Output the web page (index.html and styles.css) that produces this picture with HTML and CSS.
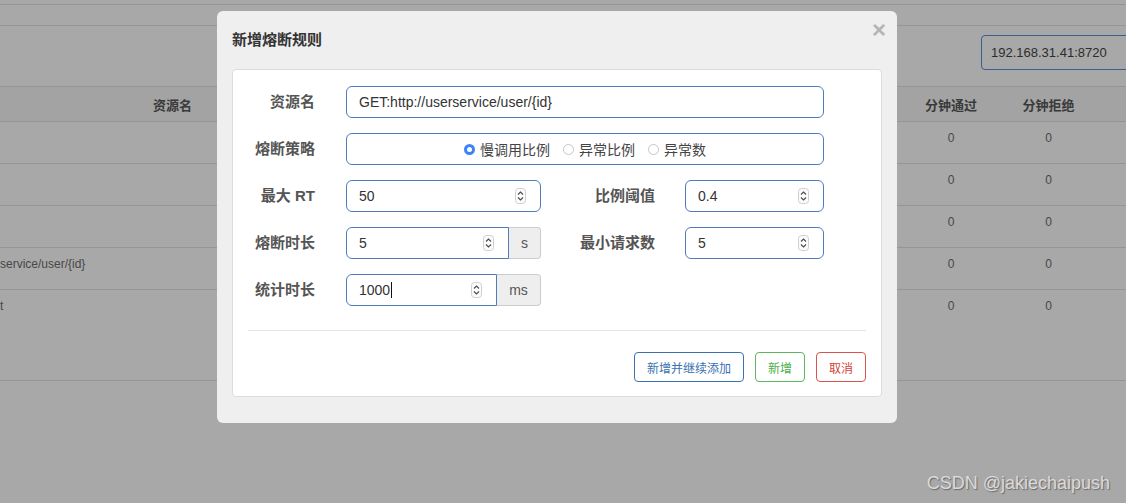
FILE: index.html
```html
<!DOCTYPE html>
<html lang="zh-CN">
<head>
<meta charset="utf-8">
<title>新增熔断规则</title>
<link rel="stylesheet" href="styles.css">
</head>
<body>
<div class="page">
  <div class="topbar"></div>
  <div class="subbar"></div>
  <div class="toolbar"><div class="ip">192.168.31.41:8720</div></div>
  <div class="table">
    <div class="trow thead">
      <div class="c">资源名</div><div class="c"></div><div class="c">分钟通过</div><div class="c">分钟拒绝</div><div class="c"></div>
    </div>
    <div class="trow tr"><div class="c name"></div><div class="c"></div><div class="c num">0</div><div class="c num">0</div><div class="c"></div></div>
    <div class="trow tr"><div class="c name"></div><div class="c"></div><div class="c num">0</div><div class="c num">0</div><div class="c"></div></div>
    <div class="trow tr"><div class="c name"></div><div class="c"></div><div class="c num">0</div><div class="c num">0</div><div class="c"></div></div>
    <div class="trow tr"><div class="c name">service/user/{id}</div><div class="c"></div><div class="c num">0</div><div class="c num">0</div><div class="c"></div></div>
    <div class="trow tr tall"><div class="c name">t</div><div class="c"></div><div class="c num">0</div><div class="c num">0</div><div class="c"></div></div>
  </div>
</div>

<div class="modal">
  <div class="modal-header"><div class="title">新增熔断规则</div></div>
  <div class="close">×</div>
  <div class="panel">
    <div class="form">
      <div class="lbl">资源名</div>
      <div class="field span3"><span class="val">GET:http://userservice/user/{id}</span></div>

      <div class="lbl">熔断策略</div>
      <div class="field span3 radios">
        <label class="opt"><span class="radio on"></span>慢调用比例</label>
        <label class="opt"><span class="radio"></span>异常比例</label>
        <label class="opt"><span class="radio"></span>异常数</label>
      </div>

      <div class="lbl">最大 RT</div>
      <div class="field"><span class="val">50</span>
        <svg class="spin" width="11" height="16" viewBox="0 0 11 16"><rect x="0.5" y="0.5" width="10" height="15" rx="3" fill="#fbfbfb" stroke="#cfcfcf"/><path d="M3 6.5 L5.5 4 L8 6.5 M3 9.5 L5.5 12 L8 9.5" fill="none" stroke="#4a4a4a" stroke-width="1.1"/></svg>
      </div>
      <div class="lbl r">比例阈值</div>
      <div class="field"><span class="val">0.4</span>
        <svg class="spin" width="11" height="16" viewBox="0 0 11 16"><rect x="0.5" y="0.5" width="10" height="15" rx="3" fill="#fbfbfb" stroke="#cfcfcf"/><path d="M3 6.5 L5.5 4 L8 6.5 M3 9.5 L5.5 12 L8 9.5" fill="none" stroke="#4a4a4a" stroke-width="1.1"/></svg>
      </div>

      <div class="lbl">熔断时长</div>
      <div class="group">
        <div class="field"><span class="val">5</span>
          <svg class="spin" width="11" height="16" viewBox="0 0 11 16"><rect x="0.5" y="0.5" width="10" height="15" rx="3" fill="#fbfbfb" stroke="#cfcfcf"/><path d="M3 6.5 L5.5 4 L8 6.5 M3 9.5 L5.5 12 L8 9.5" fill="none" stroke="#4a4a4a" stroke-width="1.1"/></svg>
        </div>
        <div class="addon">s</div>
      </div>
      <div class="lbl r">最小请求数</div>
      <div class="field"><span class="val">5</span>
        <svg class="spin" width="11" height="16" viewBox="0 0 11 16"><rect x="0.5" y="0.5" width="10" height="15" rx="3" fill="#fbfbfb" stroke="#cfcfcf"/><path d="M3 6.5 L5.5 4 L8 6.5 M3 9.5 L5.5 12 L8 9.5" fill="none" stroke="#4a4a4a" stroke-width="1.1"/></svg>
      </div>

      <div class="lbl">统计时长</div>
      <div class="group">
        <div class="field"><span class="val">1000<span class="caret"></span></span>
          <svg class="spin" width="11" height="16" viewBox="0 0 11 16"><rect x="0.5" y="0.5" width="10" height="15" rx="3" fill="#fbfbfb" stroke="#cfcfcf"/><path d="M3 6.5 L5.5 4 L8 6.5 M3 9.5 L5.5 12 L8 9.5" fill="none" stroke="#4a4a4a" stroke-width="1.1"/></svg>
        </div>
        <div class="addon wide">ms</div>
      </div>
    </div>
    <div class="divider"></div>
    <div class="actions">
      <button class="btn blue">新增并继续添加</button>
      <button class="btn green">新增</button>
      <button class="btn red">取消</button>
    </div>
  </div>
</div>

<div class="watermark">CSDN @jakiechaipush</div>
</body>
</html>
```
FILE: styles.css
```css
html, body {
  margin: 0;
  padding: 0;
  overflow: hidden;
}
body {
  width: 1126px;
  height: 503px;
  position: relative;
  background: #a8a8a8;
  font-family: "Liberation Sans", "Noto Sans CJK SC", sans-serif;
  color: #444;
}
.topbar {
  height: 4px;
  border-bottom: 1px solid #959595;
}
.subbar {
  height: 20px;
  border-bottom: 1px solid #959595;
}
.toolbar {
  height: 60px;
  border-bottom: 1px solid #959595;
  display: flex;
  justify-content: flex-end;
  overflow: hidden;
}
.ip {
  flex: none;
  margin-top: 9px;
  margin-right: -20px;
  width: 165px;
  height: 35px;
  box-sizing: border-box;
  border: 1px solid #3b5e8c;
  border-radius: 4px;
  padding-left: 9px;
  display: flex;
  align-items: center;
  font-size: 13px;
  color: #2c2c2c;
}
.trow {
  display: grid;
  grid-template-columns: 345px 557px 98px 97px 1fr;
  border-bottom: 1px solid #959595;
}
.thead {
  height: 34px;
  align-items: center;
  background: #a3a3a4;
  font-size: 13px;
  font-weight: bold;
  color: #3a3a3a;
}
.thead .c {
  text-align: center;
}
.tr {
  height: 33px;
  padding-top: 8px;
  font-size: 12px;
  line-height: 17px;
  color: #474747;
}
.tr.tall {
  height: 82px;
}
.num {
  text-align: center;
}
.name {
  white-space: nowrap;
}

/* modal */
.modal {
  position: absolute;
  left: 217px;
  top: 11px;
  width: 680px;
  box-sizing: border-box;
  padding: 15px 15px 26px;
  background: #efefef;
  border-radius: 6px;
}
.modal-header {
  height: 24px;
  margin-bottom: 19px;
  display: flex;
  align-items: center;
}
.title {
  font-size: 15px;
  font-weight: bold;
  color: #333;
  font-family: "Noto Sans CJK SC", sans-serif;
}
.close {
  position: absolute;
  top: 7px;
  right: 11px;
  font-size: 24px;
  line-height: 24px;
  font-weight: bold;
  color: #b5b5b5;
  font-family: "Liberation Sans", sans-serif;
}
.panel {
  background: #fff;
  border: 1px solid #dcdcdc;
  border-radius: 4px;
  padding: 16px 15px 14px;
}
.form {
  display: grid;
  grid-template-columns: 98px 195px 144px 139px;
  grid-auto-rows: 32px;
  row-gap: 15px;
}
.lbl {
  align-self: center;
  text-align: right;
  padding-right: 31px;
  font-size: 15px;
  line-height: 20px;
  font-weight: bold;
  color: #555;
  white-space: nowrap;
}
.lbl.r {
  padding-right: 30px;
}
.span3 {
  grid-column: 2 / 5;
}
.field {
  box-sizing: border-box;
  height: 32px;
  border: 1px solid #4f7cba;
  border-radius: 6px;
  background: #fff;
  display: flex;
  align-items: center;
  padding: 0 14px 0 12px;
  font-size: 14px;
  color: #333;
}
.val {
  flex: 1;
  white-space: nowrap;
}
.spin {
  flex: none;
  display: block;
}
.caret {
  display: inline-block;
  width: 1px;
  height: 16px;
  background: #111;
  vertical-align: -3px;
  margin-left: 1px;
}
.group {
  display: flex;
}
.group .field {
  flex: 1;
  border-radius: 6px 0 0 6px;
}
.addon {
  flex: none;
  width: 32px;
  box-sizing: border-box;
  height: 32px;
  border: 1px solid #ccc;
  border-left: 0;
  border-radius: 0 4px 4px 0;
  background: #eee;
  color: #555;
  font-size: 14px;
  display: flex;
  align-items: center;
  justify-content: center;
}
.addon.wide {
  width: 44px;
}
.radios {
  justify-content: center;
  gap: 13px;
  padding: 0;
  font-family: "Noto Sans CJK SC", sans-serif;
}
.opt {
  display: flex;
  align-items: center;
  gap: 5px;
  font-size: 14px;
  color: #444;
}
.radio {
  box-sizing: border-box;
  width: 11px;
  height: 11px;
  border-radius: 50%;
  border: 1px solid #c6c6c6;
  background: #fff;
}
.radio.on {
  border: 3.5px solid #3a84f5;
  background: #fff;
}
.divider {
  height: 1px;
  background: #e4e4e4;
  margin-top: 24px;
}
.actions {
  display: flex;
  justify-content: flex-end;
  gap: 11px;
  margin-top: 21px;
}
.btn {
  height: 30px;
  box-sizing: border-box;
  padding: 0 12px;
  border: 1px solid;
  border-radius: 4px;
  background: #fff;
  font-size: 12px;
  font-family: "Noto Sans CJK SC", sans-serif;
  display: flex;
  align-items: center;
}
.blue {
  color: #3a72b0;
  border-color: #3a72b0;
}
.green {
  color: #4cae4c;
  border-color: #5cb85c;
}
.red {
  color: #d43f3a;
  border-color: #d9534f;
}
.watermark {
  position: absolute;
  right: 16px;
  bottom: 10px;
  font-size: 18px;
  line-height: 20px;
  color: #dadada;
  text-shadow: 1px 1px 1px #6a6a6a;
}
```
